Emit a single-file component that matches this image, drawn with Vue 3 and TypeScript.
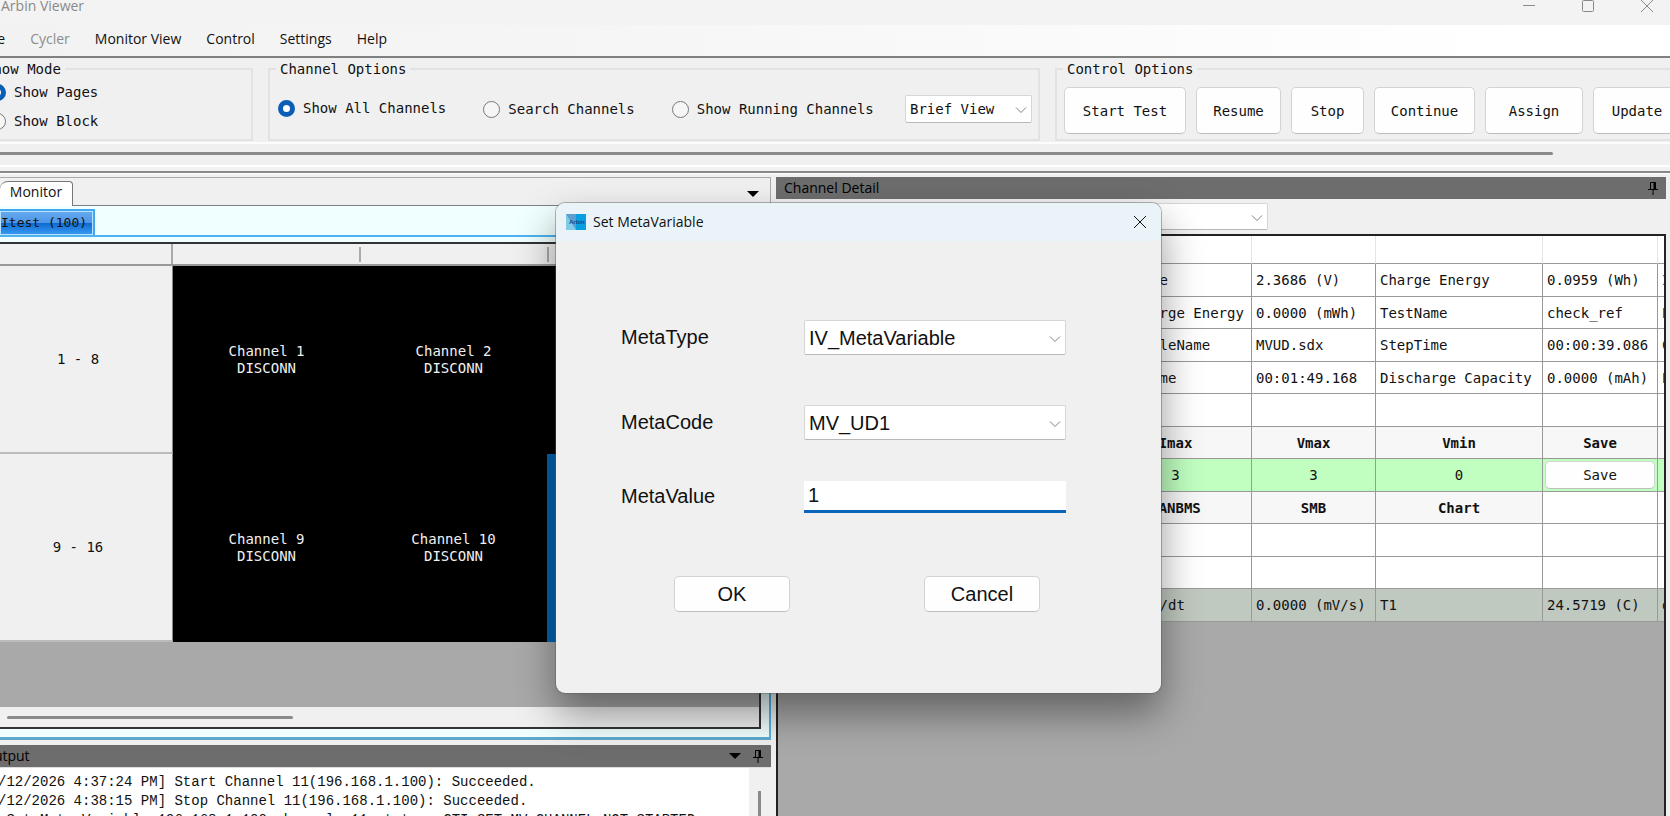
<script setup lang="ts">
import { ref } from 'vue'

interface Cell { t: string; k?: string }

const menus = ['File', 'Cycler', 'Monitor View', 'Control', 'Settings', 'Help']
const showMode = ref('pages')
const channelMode = ref('all')
const view = ref('Brief View')
const metaType = ref('IV_MetaVariable')
const metaCode = ref('MV_UD1')
const metaValue = ref('1')
const commands = [
  { label: 'Start Test', size: 'w-start' },
  { label: 'Resume', size: 'w-resume' },
  { label: 'Stop', size: 'w-stop' },
  { label: 'Continue', size: 'w-continue' },
  { label: 'Assign', size: 'w-assign' },
  { label: 'Update', size: 'w-update' },
]
const channelRows = [
  { range: '1 - 8', cells: ['Channel 1', 'Channel 2'] },
  { range: '9 - 16', cells: ['Channel 9', 'Channel 10'] },
]
const c = (k: string, ...t: string[]): Cell[] => t.map((x) => ({ t: x, k }))
const rows: { kind: string; cells: Cell[] }[] = [
  { kind: '', cells: c('', 'Voltage', '2.3686 (V)', 'Charge Energy', '0.0959 (Wh)', 'I') },
  { kind: '', cells: c('', 'Discharge Energy', '0.0000 (mWh)', 'TestName', 'check_ref', 'E') },
  { kind: '', cells: c('', 'ScheduleName', 'MVUD.sdx', 'StepTime', '00:00:39.086', 'C') },
  { kind: '', cells: c('', 'TestTime', '00:01:49.168', 'Discharge Capacity', '0.0000 (mAh)', 'E') },
  { kind: '', cells: c('', '', '', '', '', '') },
  { kind: '', cells: c('head', 'Imax', 'Vmax', 'Vmin', 'Save', '') },
  { kind: 'limits', cells: [...c('mid', '3', '3', '0'), { t: 'Save', k: 'action' }, { t: '' }] },
  { kind: '', cells: [...c('head', 'CANBMS', 'SMB', 'Chart'), ...c('', '', '')] },
  { kind: '', cells: c('', '', '', '', '', '') },
  { kind: '', cells: c('', '', '', '', '', '') },
  { kind: 'aux', cells: c('', 'Aux dV/dt', '0.0000 (mV/s)', 'T1', '24.5719 (C)', 'd') },
]
const log = [
  '/12/2026 4:37:24 PM] Start Channel 11(196.168.1.100): Succeeded.',
  '/12/2026 4:38:15 PM] Stop Channel 11(196.168.1.100): Succeeded.',
  ' Set Meta Variable 196.168.1.100 channel: 11 status: CTI_SET_MV_CHANNEL_NOT_STARTED',
]
</script>

<template>
  <div class="app">
    <header class="titlebar">
      <span>Arbin Viewer</span>
      <div class="winctl">
        <button aria-label="Minimize"><svg viewBox="0 0 14 14"><path d="M1 5.5h12" /></svg></button>
        <button aria-label="Maximize"><svg viewBox="0 0 14 14"><rect x="1.5" y="0.5" width="11" height="11" rx="1" /></svg></button>
        <button aria-label="Close"><svg viewBox="0 0 14 14"><path d="M1 0l12 12M13 0L1 12" /></svg></button>
      </div>
    </header>
    <nav class="menubar">
      <button v-for="m in menus" :key="m" :disabled="m === 'Cycler'">{{ m }}</button>
    </nav>

    <section class="toolbar">
      <fieldset class="mode">
        <legend>Show Mode</legend>
        <label><input v-model="showMode" type="radio" name="mode" value="pages" />Show Pages</label>
        <label><input v-model="showMode" type="radio" name="mode" value="block" />Show Block</label>
      </fieldset>
      <fieldset class="channels">
        <legend>Channel Options</legend>
        <label><input v-model="channelMode" type="radio" name="ch" value="all" />Show All Channels</label>
        <label><input v-model="channelMode" type="radio" name="ch" value="search" />Search Channels</label>
        <label><input v-model="channelMode" type="radio" name="ch" value="run" />Show Running Channels</label>
        <div class="combo brief">
          <select v-model="view" aria-label="View"><option>Brief View</option></select>
          <svg viewBox="0 0 12 8"><path d="M1 1.5l5 5 5-5" /></svg>
        </div>
      </fieldset>
      <fieldset class="control">
        <legend>Control Options</legend>
        <button v-for="b in commands" :key="b.label" class="btn" :class="b.size">{{ b.label }}</button>
      </fieldset>
    </section>
    <div class="hscroll"><i></i></div>

    <main class="docks">
      <div class="left">
        <section class="monitor">
          <div class="tabs">
            <button class="tab">Monitor</button>
            <svg class="drop" viewBox="0 0 12 6"><path d="M0 0h12L6 6z" /></svg>
          </div>
          <div class="pane">
            <div class="subtabs"><button>Itest (100)</button></div>
            <div class="grid">
              <div class="ghead"><span class="corner"></span><span></span><span></span><span class="rest"></span></div>
              <div v-for="(r, i) in channelRows" :key="r.range" class="grow">
                <div class="range">{{ r.range }}</div>
                <div v-for="n in r.cells" :key="n" class="chan">{{ n }}<br />DISCONN</div>
                <div class="chan rest" :class="{ active: i === 1 }"></div>
              </div>
              <div class="void"></div>
              <div class="gscroll"><i></i></div>
            </div>
          </div>
        </section>
        <section class="output">
          <header class="dockhead">
            <span class="cut">Output</span>
            <svg class="drop" viewBox="0 0 12 6"><path d="M0 0h12L6 6z" /></svg>
            <svg class="pin" viewBox="0 0 10 14"><path d="M2.5 8V1.5h5V8M0 8.5h10M5 8.5V14" /><path class="thick" d="M6.5 1v7" /></svg>
          </header>
          <div class="logwrap">
            <div class="log"><p v-for="l in log" :key="l">{{ l }}</p></div>
            <div class="vscroll"><i></i></div>
          </div>
        </section>
      </div>

      <section class="detail">
        <header class="dockhead">
          <span>Channel Detail</span>
          <svg class="pin" viewBox="0 0 10 14"><path d="M2.5 8V1.5h5V8M0 8.5h10M5 8.5V14" /><path class="thick" d="M6.5 1v7" /></svg>
        </header>
        <div class="pick">
          <div class="combo">
            <select aria-label="Channel"><option></option></select>
            <svg viewBox="0 0 12 8"><path d="M1 1.5l5 5 5-5" /></svg>
          </div>
        </div>
        <div class="sheet">
          <table>
            <colgroup><col class="c0" /><col class="c1" /><col class="c2" /><col class="c3" /><col class="c4" /><col class="c5" /></colgroup>
            <thead><tr><th v-for="n in 6" :key="n"></th></tr></thead>
            <tbody>
              <tr v-for="(r, i) in rows" :key="i" :class="r.kind">
                <td></td>
                <td v-for="(d, j) in r.cells" :key="j" :class="[d.k, { name: j === 0 && !d.k }]">
                  <button v-if="d.k === 'action'" class="btn">{{ d.t }}</button>
                  <template v-else>{{ d.t }}</template>
                </td>
              </tr>
            </tbody>
          </table>
        </div>
      </section>
    </main>

    <form class="dialog" role="dialog" aria-labelledby="dlg" @submit.prevent>
      <header>
        <svg class="logo" viewBox="0 0 20 16"><path fill="#7fcbe8" d="M0 0h20v16H0z" /><path fill="#5b9fd0" d="M0 0h10v16z" /><path fill="#079fe0" d="M10 0h10v16H10z" /><text x="3" y="10">Arbin</text></svg>
        <h1 id="dlg">Set MetaVariable</h1>
        <button type="button" aria-label="Close dialog"><svg viewBox="0 0 14 14"><path d="M1 1l12 12M13 1L1 13" /></svg></button>
      </header>
      <div class="fields">
        <label for="mt">MetaType</label>
        <div class="combo">
          <select id="mt" v-model="metaType"><option>IV_MetaVariable</option></select>
          <svg viewBox="0 0 12 8"><path d="M1 1.5l5 5 5-5" /></svg>
        </div>
        <label for="mc">MetaCode</label>
        <div class="combo">
          <select id="mc" v-model="metaCode"><option>MV_UD1</option></select>
          <svg viewBox="0 0 12 8"><path d="M1 1.5l5 5 5-5" /></svg>
        </div>
        <label for="mv">MetaValue</label>
        <input id="mv" v-model="metaValue" type="text" />
      </div>
      <footer><button type="submit" class="btn">OK</button><button type="button" class="btn">Cancel</button></footer>
    </form>
  </div>
</template>

<style>
body { margin: 0; background: #f0f0f0; }
</style>

<style scoped>
* { box-sizing: border-box; }
.app { position: relative; height: 100vh; overflow: hidden; display: flex; flex-direction: column; background: #f0f0f0; color: #111; font: 14px/18px "DejaVu Sans Mono", monospace; }
button, select, input { font: inherit; color: inherit; margin: 0; padding: 0; border: 0; background: none; border-radius: 0; }
svg { display: block; fill: none; stroke: currentColor; }
.titlebar, .menubar, .tab, .dockhead, .dialog header { font-family: "Open Sans", "Noto Sans", sans-serif; font-size: 14px; line-height: 20px; }
.titlebar { flex: none; height: 25px; display: flex; justify-content: space-between; background: #f3f3f3; color: #8a8a8a; }
.titlebar span { margin: -4px 0 0 1px; }
.winctl { display: flex; gap: 45px; margin-right: 16px; }
.winctl button, .winctl svg { width: 14px; height: 14px; }
.menubar { flex: none; height: 33px; display: flex; align-items: center; gap: 25px; margin-left: -17px; padding-bottom: 3px; background: linear-gradient(90deg, #f2f2f2, #f6f6f6 40%, #fff 90%); border-bottom: 2px solid #808080; }
.menubar button:disabled { color: #8d8d8d; }

.toolbar { flex: none; height: 86px; display: flex; padding: 3px 0 2px; border-bottom: 2px solid #fcfcfc; overflow: hidden; }
fieldset { flex: none; margin: 0; padding: 0; height: 80px; border: 2px solid #e2e2e2; min-width: 0; }
legend { padding: 0 4px; margin-left: 6px; height: 16px; line-height: 16px; }
.mode { width: 275px; margin-left: -22px; padding-top: 6px; }
.mode label { margin: 0 0 11px 9px; }
.mode legend { margin-left: 1px; }
.channels { width: 772px; margin-left: 15px; display: flex; align-items: center; }
.control { width: 640px; margin-left: 15px; padding-top: 8px; }
label { display: flex; align-items: center; gap: 8px; }
input[type="radio"] { appearance: none; flex: none; width: 17px; height: 17px; border: 1px solid #777; border-radius: 50%; background: #f6f6f6; }
input[type="radio"]:checked { border: 5px solid #0a5fb4; background: #fff; }
.channels label { margin: 0 0 0 8px; }
.channels label + label { margin: 2px 0 0 37px; }
.combo { position: relative; background: #fff; border: 1px solid #d6d6d6; border-bottom-color: #b8b8b8; border-radius: 2px; }
.combo select { appearance: none; display: block; width: 100%; height: 100%; padding: 0 4px; outline: 0; }
.combo svg { position: absolute; right: 4px; top: 50%; width: 12px; height: 8px; margin-top: -3px; stroke: #808080; pointer-events: none; }
.brief { width: 127px; height: 28px; margin: 2px 6px 0 auto; }
.btn { background: #fefefe; border: 1px solid #d3d3d3; border-bottom-color: #bdbdbd; border-radius: 5px; text-align: center; }
.control .btn { height: 47px; margin: 2px 0 0 10px; vertical-align: top; }
.control .btn:first-of-type { margin-left: 7px; }
.w-start { width: 122px; }
.w-resume { width: 85px; }
.w-stop { width: 73px; }
.w-continue { width: 101px; }
.w-assign { width: 98px; }
.w-update { width: 88px; }
.hscroll { flex: none; height: 29px; padding-top: 8px; border-bottom: 2px solid #888; background: linear-gradient(#f0f0f0 21px, #fff 21px, #fff 23px, #f2f2f2 23px); }
.hscroll i { display: block; width: 93%; height: 3px; border-radius: 0 2px 2px 0; background: #8a8a8a; }

.docks { flex: 1; min-height: 0; display: flex; gap: 5px; padding: 3px 4px 0 0; border-top: 1px solid #fff; }
.left { width: 771px; flex: none; display: flex; flex-direction: column; gap: 5px; }
.monitor { display: flex; flex-direction: column; }
.tabs { height: 29px; display: flex; align-items: flex-end; justify-content: space-between; border: 1px solid #aaa; border-left: 0; border-bottom: 1px solid #808080; }
.tab { width: 73px; height: 25px; margin-bottom: -1px; padding-bottom: 4px; background: #fff; border: 1px solid #777; border-bottom: 0; border-left: 0; border-radius: 8px 4px 0 0; }
.drop { width: 12px; height: 6px; fill: #000; stroke: none; }
.tabs .drop { margin: 0 11px 8px 0; }
.pane { background: #f0ffff; border-right: 2px solid #55aee2; border-bottom: 3px solid #5fa9cc; padding-bottom: 8px; }
.subtabs { padding-top: 3px; border-bottom: 2px solid #4fb2f0; }
.subtabs button { display: block; width: 95px; height: 26px; padding: 0 0 1px 1px; text-align: left; font-size: 13px; border: 2px solid #3fa8ee; border-left: 0; border-bottom: 0; box-shadow: inset 0 0 0 1px #b8e2ff; background: linear-gradient(#66aaf0, #4d97e6 48%, #0e6cd0 52%, #3c9cf6); }
.grid { margin: 5px 8px 0 0; border: 2px solid #333; border-left: 0; }
.ghead, .grow { display: flex; }
.ghead { height: 22px; border-bottom: 2px solid #999; }
.ghead span { width: 188px; border-right: 2px solid #aaa; margin: 3px 0 2px; }
.ghead .corner { width: 173px; margin: 0; }
.ghead .rest { flex: 1; border: 0; }
.ghead, .range { background: #f0f0f0; }
.grow { height: 188px; }
.range { width: 173px; display: flex; align-items: center; justify-content: center; padding-right: 16px; border-bottom: 2px solid #bbb; border-right: 1px solid #888; }
.chan { width: 187px; background: #000; color: #f0f0f0; text-align: center; line-height: 17px; padding-top: 77px; }
.chan.rest { flex: 1; }
.active { background: #0063b1; }
.void { height: 65px; background: #a9a9a9; }
.gscroll { height: 20px; padding: 9px 0 0 7px; background: #f0f0f0; }
.gscroll i { display: block; width: 286px; height: 3px; border-radius: 2px; background: #8a8a8a; }

.dockhead { flex: none; height: 22px; display: flex; align-items: center; background: #6d6d6d; color: #000; }
.dockhead span { flex: 1; padding-left: 8px; }
.dockhead .cut { padding-left: 0; margin-left: -17px; }
.pin { width: 10px; height: 14px; margin: 0 8px 0 12px; }
.thick { stroke-width: 2; }
.output { flex: 1; min-height: 0; display: flex; flex-direction: column; }
.logwrap { flex: 1; min-height: 0; display: flex; overflow: hidden; background: #fff; border-top: 1px solid #ddd; margin-right: 1px; }
.log { flex: 1; min-width: 0; overflow: hidden; padding-top: 5px; font-family: "Liberation Mono", monospace; line-height: 19px; }
.log p { margin: 0 0 0 -2px; white-space: pre; }
.vscroll { flex: none; width: 21px; padding: 23px 0 0 9px; background: #f0f0f0; }
.vscroll i { display: block; width: 3px; height: 100%; background: #8a8a8a; }

.detail { flex: 1; min-width: 0; display: flex; flex-direction: column; }
.pick { flex: none; height: 35px; padding-top: 4px; }
.pick .combo { width: 492px; height: 27px; }
.sheet { flex: 1; min-height: 0; overflow: hidden; background: #a9a9a9; border: 2px solid #222; border-bottom: 0; }
table { table-layout: fixed; width: 979px; border-collapse: separate; border-spacing: 0; background: #fff; }
.c0 { width: 322px; } .c1 { width: 152px; } .c2 { width: 124px; } .c3 { width: 167px; } .c4 { width: 115px; } .c5 { width: 99px; }
th { height: 28px; padding: 0; border-right: 1px solid #e4e4e4; border-bottom: 1px solid #999; }
td { height: 33px; padding: 0 0 0 4px; border-right: 1px solid #999; border-bottom: 1px solid #999; white-space: nowrap; }
.name { padding-left: 9px; }
tr:nth-child(even) td { height: 32px; }
.head { background: #f7f7f7; font-weight: bold; }
.head, .mid { text-align: center; padding: 0; }
.limits { background: #c0ffc0; }
.action { padding: 0 2px; }
.action .btn { display: block; width: 100%; height: 28px; }
.aux { background: #c0c9c0; }

.dialog { position: absolute; left: calc(50% - 279px); top: 203px; width: 605px; padding-bottom: 81px; background: #f0f0f0; border-radius: 9px; box-shadow: 0 0 0 1px rgba(90, 90, 90, .45), 0 20px 40px rgba(0, 0, 0, .42); font: 20px/24px "Liberation Sans", Arial, sans-serif; overflow: hidden; }
.dialog header { height: 38px; display: flex; align-items: center; padding: 0 14px 1px 10px; background: #eaf4f8; }
.logo { width: 20px; height: 16px; stroke: none; }
.logo text { font: bold 6px "Liberation Sans", sans-serif; fill: #174a7c; }
h1 { flex: 1; margin: 0 0 0 7px; font: inherit; }
.dialog header svg:not(.logo) { width: 14px; height: 14px; }
.fields { display: grid; grid-template-columns: 183px 262px; row-gap: 50px; padding: 79px 0 0 65px; }
.fields .combo { height: 35px; }
.fields label { padding-bottom: 2px; }
.fields input { height: 32px; margin-top: -9px; padding: 0 4px; background: #fff; border-bottom: 3px solid #0a64b8; outline: 0; }
.fields label:last-of-type { margin-top: -9px; }
.dialog footer { display: flex; gap: 134px; padding: 63px 0 0 118px; }
.dialog footer .btn { width: 116px; height: 36px; padding-bottom: 1px; }
</style>
